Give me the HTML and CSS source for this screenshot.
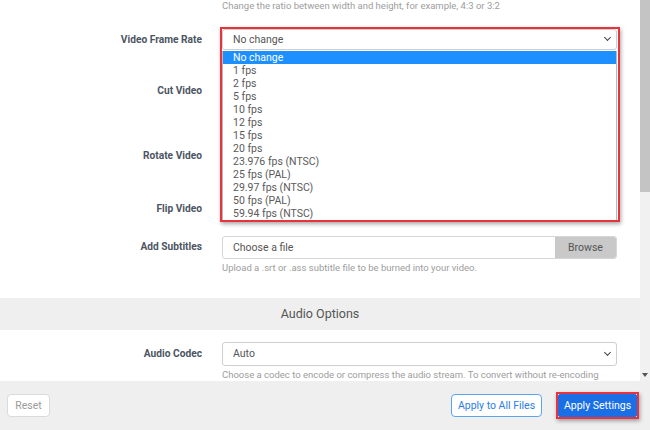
FILE: index.html
```html
<!DOCTYPE html>
<html>
<head>
<meta charset="utf-8">
<link rel="stylesheet" href="styles.css">
</head>
<body>
<div class="viewport">
  <div class="content">
    <div class="card card-video">
      <div class="row row-top">
        <div class="label"></div>
        <div class="field"><div class="help help-first">Change the ratio between width and height, for example, 4:3 or 3:2</div></div>
      </div>
      <div class="row row-fps">
        <div class="label">Video Frame Rate</div>
        <div class="field">
          <div class="select-wrap">
            <div class="select">No change<span class="chev"></span></div>
            <ul class="options">
              <li class="active">No change</li>
              <li>1 fps</li>
              <li>2 fps</li>
              <li>5 fps</li>
              <li>10 fps</li>
              <li>12 fps</li>
              <li>15 fps</li>
              <li>20 fps</li>
              <li>23.976 fps (NTSC)</li>
              <li>25 fps (PAL)</li>
              <li>29.97 fps (NTSC)</li>
              <li>50 fps (PAL)</li>
              <li>59.94 fps (NTSC)</li>
            </ul>
            <div class="annot annot-list"></div>
          </div>
        </div>
      </div>
      <div class="row row-cut"><div class="label">Cut Video</div><div class="field"></div></div>
      <div class="row row-rotate"><div class="label">Rotate Video</div><div class="field"></div></div>
      <div class="row row-flip"><div class="label">Flip Video</div><div class="field"></div></div>
      <div class="row row-sub">
        <div class="label">Add Subtitles</div>
        <div class="field">
          <div class="file">
            <span class="file-text">Choose a file</span>
            <span class="browse">Browse</span>
          </div>
          <div class="help">Upload a .srt or .ass subtitle file to be burned into your video.</div>
        </div>
      </div>
    </div>
    <div class="section-head">Audio Options</div>
    <div class="card card-audio">
      <div class="row row-codec">
        <div class="label">Audio Codec</div>
        <div class="field">
          <div class="select select-codec">Auto<span class="chev"></span></div>
          <div class="help">Choose a codec to encode or compress the audio stream. To convert without re-encoding</div>
        </div>
      </div>
    </div>
  </div>
  <div class="scrollbar">
    <div class="thumb"></div>
    <div class="track"><span class="arrow"></span></div>
  </div>
</div>
<div class="footer">
  <button class="btn btn-reset">Reset</button>
  <div class="spacer"></div>
  <button class="btn btn-all">Apply to All Files</button>
  <div class="apply-wrap">
    <button class="btn btn-apply">Apply Settings</button>
    <div class="annot annot-btn"></div>
  </div>
</div>
</body>
</html>
```

FILE: styles.css
```css
* { box-sizing: border-box; }
html, body { margin: 0; padding: 0; }
body {
  width: 650px;
  height: 430px;
  overflow: hidden;
  background: #efefef;
  font-family: Roboto, "Liberation Sans", sans-serif;
  font-size: 10.5px;
  color: #555;
}
.viewport {
  display: flex;
  height: 381px;
}
.content {
  width: 640px;
  display: flex;
  flex-direction: column;
  overflow: hidden;
}
.card { background: #fff; }
.card-video { height: 298px; flex: none; }
.card-audio { flex: 1; }
.row {
  display: flex;
  gap: 20px;
}
.label {
  width: 202px;
  flex: none;
  text-align: right;
  font-weight: 700;
  font-size: 10.2px;
  color: #4d5563;
  line-height: 22px;
}
.field { width: 395px; flex: none; }
.help {
  color: #9d9d9d;
  font-size: 9.5px;
  line-height: 12px;
  margin-top: 3px;
  white-space: nowrap;
}
.help-first { margin-top: 0; }
.row-top { height: 29px; }
.row-fps { height: 51px; }
.row-fps .label { line-height: 21px; }
.row-cut { height: 65px; }
.row-rotate { height: 53px; }
.row-flip { height: 38px; }

.select-wrap { position: relative; }
.select {
  position: relative;
  height: 21px;
  line-height: 19px;
  border: 1px solid #cfcfcf;
  border-radius: 3px;
  padding-left: 10px;
  background: #fff;
  color: #555;
}
.chev {
  position: absolute;
  right: 6px;
  top: 5px;
  width: 5px;
  height: 5px;
  border-right: 1.5px solid #444;
  border-bottom: 1.5px solid #444;
  transform: rotate(45deg);
}
.options {
  position: absolute;
  left: 0;
  top: 22px;
  width: 395px;
  margin: 0;
  padding: 0;
  list-style: none;
  background: #fff;
  border: 1px solid #b9b9b9;
  border-top: none;
  z-index: 2;
}
.options li {
  height: 13px;
  line-height: 13px;
  padding-left: 10px;
  color: #5a5a5a;
}
.options li.active {
  background: #1e8fff;
  color: #fff;
}
.annot {
  position: absolute;
  border: 2px solid #e8333d;
  box-shadow: 1px 2px 4px rgba(0, 0, 0, 0.35);
  z-index: 3;
  pointer-events: none;
}
.annot-list {
  top: -2px;
  left: -2px;
  width: 400px;
  height: 195px;
}

.file {
  display: flex;
  height: 23px;
  border: 1px solid #d6d6d6;
  border-radius: 3px;
  overflow: hidden;
}
.file-text {
  flex: 1;
  line-height: 21px;
  padding-left: 10px;
  color: #555;
}
.browse {
  width: 61px;
  background: #c9c9c9;
  text-align: center;
  line-height: 21px;
  color: #555;
}

.section-head {
  flex: none;
  height: 32px;
  line-height: 32px;
  text-align: center;
  font-size: 12.5px;
  color: #555;
  background: #efefef;
}
.card-audio { padding-top: 12px; }
.select-codec {
  height: 24px;
  line-height: 22px;
}
.select-codec .chev { top: 7px; }
.row-codec .label { line-height: 24px; }

.scrollbar {
  width: 10px;
  display: flex;
  flex-direction: column;
  background: #f1f1f1;
}
.thumb {
  height: 192px;
  background: #c4c4c4;
}
.track {
  flex: 1;
  position: relative;
}
.arrow {
  position: absolute;
  left: 2px;
  bottom: 4px;
  width: 0;
  height: 0;
  border-left: 3px solid transparent;
  border-right: 3px solid transparent;
  border-top: 4px solid #555;
}

.footer {
  height: 49px;
  display: flex;
  align-items: center;
  padding: 0 13px 0 7px;
  background: #efefef;
}
.spacer { flex: 1; }
.btn {
  height: 23px;
  font-family: Roboto, "Liberation Sans", sans-serif;
  font-size: 10.5px;
  border-radius: 4px;
  padding: 0;
  margin: 0;
}
.btn-reset {
  width: 43px;
  background: #fff;
  border: 1px solid #dadada;
  color: #9a9a9a;
}
.btn-all {
  width: 91px;
  background: #fff;
  border: 1px solid #5aa5ee;
  color: #2b7de9;
  margin-right: 16px;
}
.apply-wrap { position: relative; }
.btn-apply {
  width: 79px;
  display: block;
  background: #1a6fe6;
  border: 1px solid #1a6fe6;
  color: #fff;
  border-radius: 2px;
}
.annot-btn {
  top: -2px;
  left: -2px;
  width: 83px;
  height: 27px;
}
```
